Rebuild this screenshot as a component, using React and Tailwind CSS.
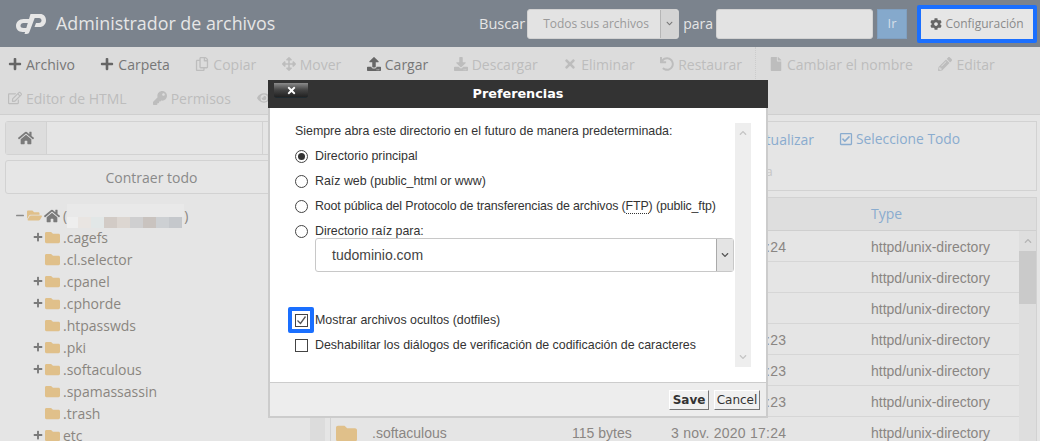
import { FaPlus, FaRegCopy, FaArrowsAlt, FaUpload, FaDownload, FaTimes, FaUndo, FaFile, FaPencilAlt, FaRegEdit, FaKey, FaEye, FaHome, FaFolder, FaFolderOpen, FaCog, FaRegCheckSquare, FaMinus, FaChevronUp, FaChevronDown } from 'react-icons/fa';

const row1 = [
  { icon: FaPlus, label: 'Archivo', on: true },
  { icon: FaPlus, label: 'Carpeta', on: true },
  { icon: FaRegCopy, label: 'Copiar' },
  { icon: FaArrowsAlt, label: 'Mover' },
  { icon: FaUpload, label: 'Cargar', on: true },
  { icon: FaDownload, label: 'Descargar' },
  { icon: FaTimes, label: 'Eliminar' },
  { icon: FaUndo, label: 'Restaurar' },
];
const row1b = [
  { icon: FaFile, label: 'Cambiar el nombre' },
  { icon: FaPencilAlt, label: 'Editar' },
];
const row2 = [
  { icon: FaRegEdit, label: 'Editor de HTML' },
  { icon: FaKey, label: 'Permisos' },
  { icon: FaEye, label: 'Ver' },
];

const tree = [
  { name: '.cagefs', plus: true },
  { name: '.cl.selector' },
  { name: '.cpanel', plus: true },
  { name: '.cphorde', plus: true },
  { name: '.htpasswds' },
  { name: '.pki', plus: true },
  { name: '.softaculous', plus: true },
  { name: '.spamassassin' },
  { name: '.trash' },
  { name: 'etc', plus: true },
];

const files = [
  { name: '.cagefs', size: '4 KB', date: '3 nov. 2020 17:24' },
  { name: '.cl.selector', size: '4 KB', date: '' },
  { name: '.cpanel', size: '4 KB', date: '' },
  { name: '.cphorde', size: '4 KB', date: '3 nov. 2020 17:23' },
  { name: '.htpasswds', size: '4 KB', date: '3 nov. 2020 17:23' },
  { name: '.pki', size: '4 KB', date: '3 nov. 2020 17:23' },
  { name: '.softaculous', size: '115 bytes', date: '3 nov. 2020 17:24' },
];

const blurBottom = ['bg-[#e9e5e2]', 'bg-[#e2e7e7]', 'bg-[#d2cbc6]', 'bg-[#dcd6d1]', 'bg-[#cfcfd0]', 'bg-[#c9c3bf]', 'bg-[#cdd0d3]', 'bg-[#c5c8cc]'];

function ToolItem({ icon: Icon, label, on }) {
  return (
    <div className={'flex items-center gap-[4px] text-[14px] ' + (on ? 'text-[#777777]' : 'text-[#bdbdbd]')}>
      <Icon className={'text-[14px] ' + (on ? 'text-[#666666]' : 'text-[#bdbdbd]')} />
      <span>{label}</span>
    </div>
  );
}

function Radio({ checked, label }) {
  return (
    <div className="flex items-center h-[25px] gap-[7px]">
      <span className="w-[13px] h-[13px] rounded-full border border-[#444444] flex items-center justify-center shrink-0">
        {checked && <span className="w-[7px] h-[7px] rounded-full bg-[#333333]" />}
      </span>
      <span>{label}</span>
    </div>
  );
}

export default function App() {
  return (
    <div className="relative w-[1040px] h-[441px] overflow-hidden bg-[#e5e5e5] font-['Open_Sans',sans-serif]">
      {/* header */}
      <div className="h-[47px] bg-[#7b838d] flex items-center pl-[16px] pr-[3px]">
        <svg width="30" height="20" viewBox="0 0 30 20" className="shrink-0">
          <path d="M14 5H7.500C3 5 0 8 0 11.800 0 15.500 2.500 18 6.500 18H10.500L12 14H7.500C5.500 14 4.500 13 4.500 11.700 4.500 10.200 5.700 9 7.500 9H12.500z" fill="#e6e6e6" />
          <path d="M14.500 0H24C27.800 0 30 2.700 30 6.200 30 10 27.300 13 23.500 13H18.500L20 9H23C24.500 9 25.500 7.900 25.500 6.500 25.500 5 24.500 4 23 4H18.700L13.500 17.800C13 19.300 12 20 10.500 20H8.500z" fill="#e6e6e6" />
        </svg>
        <div className="ml-[10px] text-[17.850px] text-[#e6e6e6]">Administrador de archivos</div>
        <div className="ml-auto flex items-center text-[14px] text-[#e6e6e6]">
          <span className="mr-[2px] text-[14.500px]">Buscar</span>
          <div className="w-[152px] h-[30px] bg-[#e3e3e3] border border-[#d2d2d2] rounded-[3px] flex items-center justify-between text-[12px] text-[#9a9a9a] whitespace-nowrap">
            <span className="pl-[15px]">Todos sus archivos</span>
            <span className="w-[18px] h-full bg-[#d4d4d4] border-l border-[#b5b5b5] rounded-r-[3px] flex items-center justify-center"><FaChevronDown className="text-[7px] text-[#777777]" /></span>
          </div>
          <span className="ml-[4px] mr-[3px]">para</span>
          <div className="w-[157px] h-[30px] bg-[#e3e3e3] border border-[#d2d2d2] rounded-[3px]" />
          <div className="ml-[4px] w-[30px] h-[30px] bg-[#85a9cc] border border-[#7f9fc0] flex items-center justify-center text-[13px] text-[#d5dfe8]">Ir</div>
          <div className="ml-[10px] w-[120px] h-[38px] border-[4px] border-[#1a6fff] rounded-[2px] bg-[#e6e6e6] flex items-center justify-center gap-[3px] text-[12px] text-[#8a8a8a]">
            <FaCog className="text-[12px] text-[#666666]" />
            <span>Configuración</span>
          </div>
        </div>
      </div>

      {/* toolbar */}
      <div className="h-[68px] bg-[#dcdcdc] border-b border-[#cfcfcf] pl-[8px]">
        <div className="h-[34px] flex items-center gap-[25.500px]">
          {row1.map((item) => <ToolItem key={item.label} {...item} />)}
          <div className="w-0 h-[34px] -mx-[12.500px] border-l border-dotted border-[#cccccc]" />
          {row1b.map((item) => <ToolItem key={item.label} {...item} />)}
        </div>
        <div className="h-[34px] flex items-center gap-[26px]">
          {row2.map((item) => <ToolItem key={item.label} {...item} />)}
        </div>
      </div>

      {/* main */}
      <div className="flex gap-[5px] pl-[5px] pr-[3px] pt-[6px]">
        <div className="w-[320px] shrink-0">
          <div className="h-[34px] flex border border-[#d2d2d2] rounded-[3px]">
            <div className="w-[41px] bg-[#dddddd] border-r border-[#d2d2d2] flex items-center justify-center"><FaHome className="text-[16px] text-[#7a7a7a]" /></div>
            <div className="w-[216px] border-r border-[#d2d2d2]" />
          </div>
          <div className="mt-[5px] h-[34px] border border-[#d2d2d2] rounded-[3px] bg-[#e6e6e6] flex items-center justify-center text-[14px] text-[#8a8a8a] w-[293px]">Contraer todo</div>
          <div className="flex mt-[11px]">
            <div className="flex-1 pl-[10px] text-[14px] text-[#8a8580]">
              <div className="h-[21px] flex items-center">
                <FaMinus className="text-[9px] text-[#8a8a8a] w-[10px]" />
                <FaFolderOpen className="ml-[2px] text-[15px] text-[#e0c08a]" />
                <FaHome className="ml-[2px] text-[16px] text-[#7a7a7a]" />
                <span className="ml-[3px]">(</span>
                <div className="w-[117px] h-[24px] flex flex-col">
                  <div className="h-[13px] bg-[#e9e9e9]" />
                  <div className="h-[11px] flex">
                    <div className="w-[11px] bg-[#eeeeee]" />
                    {blurBottom.map((c) => <div key={c} className={'w-[13px] ' + c} />)}
                  </div>
                </div>
                <span>)</span>
              </div>
              {tree.map((t) => (
                <div key={t.name} className="h-[22px] flex items-center pl-[18px]">
                  <span className="w-[10px] flex justify-center">{t.plus && <FaPlus className="text-[10px] text-[#7a7a7a]" />}</span>
                  <FaFolder className="ml-[2px] text-[15px] text-[#e0c08a]" />
                  <span className="ml-[3px]">{t.name}</span>
                </div>
              ))}
            </div>
            <div className="w-[15px] bg-[#dcdcdc]" />
          </div>
        </div>

        <div className="flex-1">
          <div className="h-[70px] border border-[#d2d2d2] text-[14px]">
            <div className="h-[34px] flex items-center pl-[419px] gap-[25px] text-[#8aaccf]">
              <span className="whitespace-nowrap">Actualizar</span>
              <span className="flex items-center gap-[3px] whitespace-nowrap text-[13.800px]"><FaRegCheckSquare className="text-[14px]" />Seleccione Todo</span>
            </div>
            <div className="h-[32px] flex items-center pl-[334px] text-[13px] text-[#c5c5c5]">Vaciar la papelera</div>
          </div>
          <div className="mt-[6px] border border-[#d2d2d2]">
            <div className="h-[33px] pb-[2px] bg-[#dedede] border-b border-[#cfcfcf] grid grid-cols-[241px_99px_200px_1fr] items-center text-[14px] text-[#8aaccf]">
              <span className="pl-[42px]">Name</span>
              <span>Size</span>
              <span>Last Modified</span>
              <span>Type</span>
            </div>
            <div className="flex">
              <div className="flex-1">
                {files.map((f) => (
                  <div key={f.name} className="h-[31px] pt-[2px] border-b border-[#d6d6d6] grid grid-cols-[241px_99px_200px_1fr] items-center font-['Liberation_Sans',sans-serif] text-[14px] text-[#8a8683]">
                    <span className="flex items-center pl-[5px] gap-[15px]"><FaFolder className="text-[21px] text-[#e0c08a]" />{f.name}</span>
                    <span>{f.size}</span>
                    <span className="tracking-[0.25px]">{f.date}</span>
                    <span>httpd/unix-directory</span>
                  </div>
                ))}
              </div>
              <div className="w-[17px] bg-[#dedede] flex flex-col items-center pt-[6px]">
                <FaChevronUp className="text-[8px] text-[#b5b5b5]" />
                <div className="mt-[6px] w-full h-[53px] bg-[#cacaca]" />
              </div>
            </div>
          </div>
        </div>
      </div>

      {/* dialog */}
      <div className="absolute left-[268px] top-[80px] w-[500px] font-['Liberation_Sans',sans-serif]">
        <div className="h-[28px] bg-[#333333] relative flex items-center justify-center font-['DejaVu_Sans',sans-serif] font-bold text-[12.800px] text-white">
          <div className="absolute left-[6px] top-[3px] w-[34px] h-[15px] rounded-b-[3px] bg-gradient-to-b from-[#8c8c8c] via-[#444444] to-[#222222] border-b border-[#1f2a30] flex items-center justify-center">
            <FaTimes className="text-[11px] text-white" />
          </div>
          Preferencias
        </div>
        <div className="border-x-2 border-b-2 border-[#cccccc] bg-white">
          <div className="h-[274px] flex text-[12.400px] text-[#333333]">
            <div className="w-[465px] pl-[25px] pt-[11px]">
              <div className="h-[25px] flex items-center">Siempre abra este directorio en el futuro de manera predeterminada:</div>
              <Radio checked label="Directorio principal" />
              <Radio label="Raíz web (public_html or www)" />
              <Radio label={<span className="tracking-[-0.12px]">Root pública del Protocolo de transferencias de archivos (<span className="border-b border-dotted border-[#333333]">FTP</span>) (public_ftp)</span>} />
              <Radio label="Directorio raíz para:" />
              <div className="-mt-[6px] ml-[20px] w-[419px] h-[34px] border border-[#c8c8c8] rounded-[3px] flex items-center justify-between text-[14px] text-[#444444]">
                <span className="pl-[16px]">tudominio.com</span>
                <span className="w-[17px] h-full bg-[#e4e4e4] border-l border-[#aaaaaa] flex items-center justify-center"><FaChevronDown className="text-[8px] text-[#555555]" /></span>
              </div>
              <div className="mt-[36px] h-[25px] flex items-center gap-[7px] relative">
                <span className="absolute -left-[7px] top-[-1px] w-[26px] h-[26px] border-[4px] border-[#1a6fff] rounded-[2px]" />
                <span className="w-[13px] h-[13px] border border-[#444444] flex items-center justify-center shrink-0">
                  <svg width="11" height="11" viewBox="0 0 11 11"><path d="M1.500 5.500l3 3 5-7" fill="none" stroke="#555555" strokeWidth="1.300" /></svg>
                </span>
                <span>Mostrar archivos ocultos (dotfiles)</span>
              </div>
              <div className="h-[25px] flex items-center gap-[7px]">
                <span className="w-[13px] h-[13px] border border-[#444444] shrink-0" />
                <span>Deshabilitar los diálogos de verificación de codificación de caracteres</span>
              </div>
            </div>
            <div className="mt-[15px] w-[16px] h-[244px] bg-[#eeeeee] flex flex-col items-center justify-between py-[6px]">
              <FaChevronUp className="text-[8px] text-[#c5c5c5]" />
              <FaChevronDown className="text-[8px] text-[#c5c5c5]" />
            </div>
          </div>
          <div className="h-[34px] bg-[#ededed] border-t border-[#cccccc] flex items-center justify-end gap-[5px] pr-[6px] text-[12px]">
            <div className="w-[40px] h-[20px] bg-[#f0f0f0] border border-t-white border-l-white border-r-[#777777] border-b-[#777777] flex items-center justify-center font-['DejaVu_Sans',sans-serif] font-bold text-[#333333]">Save</div>
            <div className="w-[46px] h-[20px] bg-[#f0f0f0] border border-t-white border-l-white border-r-[#777777] border-b-[#777777] flex items-center justify-center font-['DejaVu_Sans',sans-serif] text-[#333333]">Cancel</div>
          </div>
        </div>
      </div>
    </div>
  );
}
